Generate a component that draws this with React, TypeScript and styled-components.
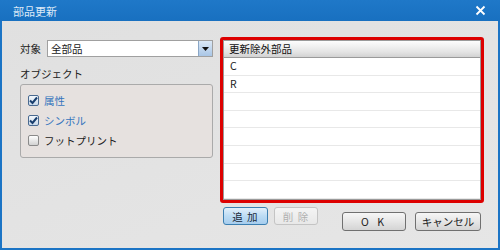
import React from "react";
import styled, { createGlobalStyle } from "styled-components";

const GlobalStyle = createGlobalStyle`
    html, body {
        margin: 0;
        padding: 0;
        width: 500px;
        height: 250px;
        overflow: hidden;
        font-family: "Noto Sans CJK JP", "Noto Sans", sans-serif;
        font-size: 10.5px;
        color: #222;
        white-space: nowrap;
    }
`;

const rows = ["C", "R", "", "", "", "", "", ""];

const Check: React.FC = () => (
    <svg width="9" height="9" viewBox="0 0 9 9">
        <path d="M1 4.5 L3.5 7 L8 1.5" stroke="#1a3f6e" strokeWidth="2" fill="none" />
    </svg>
);

const App: React.FC = () => {
    return (
        <Window>
            <GlobalStyle />
            <TitleBar>
                <Title>部品更新</Title>
                <Close>
                    <svg width="11" height="11" viewBox="0 0 11 11">
                        <path d="M1.5 1.5 L9.5 9.5 M9.5 1.5 L1.5 9.5" stroke="#fff" strokeWidth="1.8" />
                    </svg>
                </Close>
            </TitleBar>
            <Body>
                <LeftColumn>
                    <TargetRow>
                        <Label>対象</Label>
                        <Combo>
                            <ComboText>全部品</ComboText>
                            <ComboButton>
                                <svg width="7" height="4" viewBox="0 0 7 4">
                                    <path d="M0 0 L7 0 L3.5 4 Z" fill="#111" />
                                </svg>
                            </ComboButton>
                        </Combo>
                    </TargetRow>
                    <GroupLabel>オブジェクト</GroupLabel>
                    <GroupBox>
                        <CheckRow checked>
                            <Box checked><Check /></Box>
                            属性
                        </CheckRow>
                        <CheckRow checked>
                            <Box checked><Check /></Box>
                            シンボル
                        </CheckRow>
                        <CheckRow>
                            <Box />
                            フットプリント
                        </CheckRow>
                    </GroupBox>
                </LeftColumn>
                <RightColumn>
                    <Highlight>
                        <List>
                            <ListHeader>更新除外部品</ListHeader>
                            {rows.map((r, i) => (
                                <ListRow key={i}>{r}</ListRow>
                            ))}
                        </List>
                    </Highlight>
                    <ButtonRow>
                        <SmallButton variant="focus">追 加</SmallButton>
                        <SmallButton variant="disabled">削 除</SmallButton>
                        <Spacer />
                        <DialogButton wide>O K</DialogButton>
                        <DialogButton>キャンセル</DialogButton>
                    </ButtonRow>
                </RightColumn>
            </Body>
        </Window>
    );
};

export default App;

const Window = styled.div`
    width: 500px;
    height: 250px;
    display: flex;
    flex-direction: column;
    background: #1b74c5;
`;

const TitleBar = styled.div`
    height: 21px;
    flex: none;
    display: flex;
    align-items: center;
    justify-content: space-between;
    padding: 0 14px 0 13px;
    background: linear-gradient(#1f78c8, #1870c0);
`;

const Title = styled.div`
    color: #dce9f7;
    font-size: 11px;
`;

const Close = styled.div`
    display: flex;
    align-items: center;
`;

const Body = styled.div`
    flex: 1;
    margin: 0 2px 2px 2px;
    padding: 16px 14px 0 18px;
    background: linear-gradient(160deg, #e0e0e0, #e6e6e6);
    display: flex;
    gap: 5px;
`;

const LeftColumn = styled.div`
    width: 195px;
    display: flex;
    flex-direction: column;
    padding-top: 3px;
`;

const TargetRow = styled.div`
    display: flex;
    align-items: center;
    height: 17px;
    gap: 5px;
`;

const Label = styled.div`
    width: 22px;
`;

const Combo = styled.div`
    width: 166px;
    height: 17px;
    box-sizing: border-box;
    border: 1px solid #a0a0a0;
    background: #fff;
    display: flex;
    align-items: center;
`;

const ComboText = styled.div`
    flex: 1;
    padding-left: 3px;
    line-height: 15px;
`;

const ComboButton = styled.div`
    width: 14px;
    height: 15px;
    box-sizing: border-box;
    border-left: 1px solid #8aa6c6;
    background: linear-gradient(#dbe8f6, #a9c6e6);
    display: flex;
    align-items: center;
    justify-content: center;
`;

const GroupLabel = styled.div`
    margin-top: 8px;
    line-height: 17px;
    height: 17px;
`;

const GroupBox = styled.div`
    margin-top: 2px;
    width: 193px;
    height: 74px;
    box-sizing: border-box;
    border: 1px solid #aaa;
    border-radius: 3px;
    background: #e6e1df;
    padding: 6px 0 0 7px;
    display: flex;
    flex-direction: column;
    gap: 2px;
`;

const CheckRow = styled.div<{ checked?: boolean }>`
    display: flex;
    align-items: center;
    gap: 5px;
    height: 18px;
    color: ${p => (p.checked ? "#3575bd" : "#222")};
`;

const Box = styled.div<{ checked?: boolean }>`
    width: 11px;
    height: 11px;
    box-sizing: border-box;
    border: 1px solid ${p => (p.checked ? "#4a6a90" : "#8a8a8a")};
    border-radius: 2px;
    background: ${p => (p.checked ? "linear-gradient(#f4f8fc, #c9d9ea)" : "linear-gradient(#ffffff, #d2d2d2)")};
    display: flex;
    align-items: center;
    justify-content: center;
`;

const RightColumn = styled.div`
    width: 264px;
    display: flex;
    flex-direction: column;
`;

const Highlight = styled.div`
    height: 166px;
    box-sizing: border-box;
    border: 3px solid #dd0000;
    border-radius: 3px;
    display: flex;
`;

const List = styled.div`
    flex: 1;
    border: 1px solid #9a9a9a;
    background: #fff;
    overflow: hidden;
`;

const ListHeader = styled.div`
    height: 17px;
    box-sizing: border-box;
    border-bottom: 1px solid #9a9a9a;
    background: linear-gradient(#fdfdfd, #e3e3e3 70%, #d2d2d2);
    padding-left: 5px;
    line-height: 16px;
    color: #111;
`;

const ListRow = styled.div`
    height: 17.6px;
    box-sizing: border-box;
    border-bottom: 1px solid #e8e8e8;
    padding-left: 6px;
    line-height: 16px;
`;

const ButtonRow = styled.div`
    display: flex;
    align-items: flex-start;
    padding: 4px 3px 0 3px;
    gap: 6px;
`;

const Spacer = styled.div`
    width: 12px;
`;

const SmallButton = styled.div<{ variant: "focus" | "disabled" }>`
    width: 46px;
    height: 18px;
    box-sizing: border-box;
    border-radius: 3px;
    display: flex;
    align-items: center;
    justify-content: center;
    font-size: 10.5px;
    letter-spacing: 1px;
    border: 1px solid ${p => (p.variant === "focus" ? "#3c7fb1" : "#c4c4c4")};
    background: ${p =>
        p.variant === "focus"
            ? "linear-gradient(#e2f0fb, #bcdcf4 50%, #a6cdee)"
            : "linear-gradient(#f4f4f4, #e8e8e8)"};
    color: ${p => (p.variant === "focus" ? "#1a2a3a" : "#b0b0b0")};
`;

const DialogButton = styled.div<{ wide?: boolean }>`
    margin-top: 5px;
    margin-left: ${p => (p.wide ? "0" : "3px")};
    width: ${p => (p.wide ? "66px" : "68px")};
    height: 19px;
    box-sizing: border-box;
    border: 1px solid #707070;
    border-radius: 3px;
    background: linear-gradient(#f6f6f6, #e6e6e6 50%, #d4d4d4);
    display: flex;
    align-items: center;
    justify-content: center;
    font-size: 10.5px;
    letter-spacing: ${p => (p.wide ? "3px" : "0")};
`;
